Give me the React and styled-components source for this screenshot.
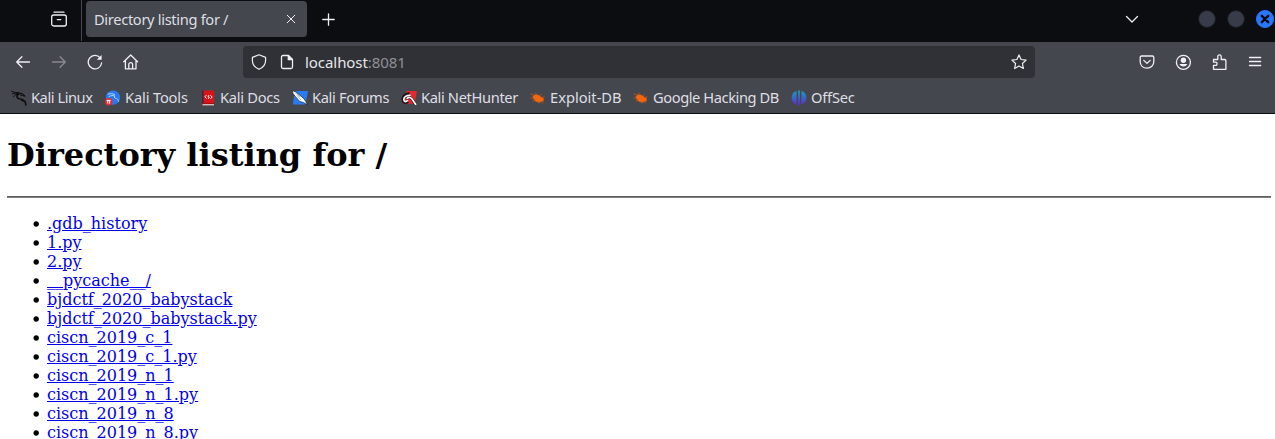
import React from "react";
import styled, { createGlobalStyle } from "styled-components";

const Global = createGlobalStyle`
  * { box-sizing: border-box; }
  html, body { margin: 0; height: 439px; overflow: hidden; background: #fff; }
`;

const Browser = styled.div`
  width: 1275px;
  height: 439px;
  overflow: hidden;
  display: flex;
  flex-direction: column;
  font-family: "Noto Sans", sans-serif;
  font-size: 14.67px;
  color: #f0f0f4;
`;

const TabStrip = styled.div`
  height: 42px;
  flex: none;
  display: flex;
  align-items: flex-start;
  background: #0c0d11;
`;

const FirefoxView = styled.div`
  width: 82px;
  height: 41px;
  padding: 11px 0 0 51px;
  border-right: 1px solid #46484f;
`;

const Tab = styled.div`
  width: 221px;
  height: 36px;
  margin: 1px 0 0 4px;
  padding: 0 8px;
  border-radius: 4px;
  background: #45474f;
  display: flex;
  align-items: center;
  justify-content: space-between;
`;

const Label = styled.span`
  white-space: nowrap;
  line-height: 20px;
  color: #dfdfe3;
  letter-spacing: ${(p) => p.$spacing || 0}px;
`;

const NewTab = styled.div`
  padding: 11px 0 0 13px;
`;

const WindowControls = styled.div`
  margin-left: auto;
  height: 38px;
  display: flex;
  align-items: center;
`;

const TabMenu = styled.div`
  display: flex;
  margin-right: 47px;
`;

const WindowButton = styled.div`
  width: 18px;
  height: 18px;
  margin-left: 11px;
  margin-right: ${(p) => (p.$close ? 1 : 0)}px;
  border-radius: 50%;
  border: 1px solid ${(p) => (p.$close ? "#2777ff" : "#17191f")};
  background: ${(p) => (p.$close ? "#2777ff" : "#383c4a")};
  color: #08090d;
  display: flex;
  align-items: center;
  justify-content: center;
`;

const Toolbar = styled.div`
  height: 40px;
  flex: none;
  display: flex;
  align-items: center;
  padding: 0 12px 0 15px;
  background: #45474f;
`;

const NavButtons = styled.div`
  display: flex;
  gap: 20px;
  width: 228px;
`;

const AddressBar = styled.div`
  width: 792px;
  height: 32px;
  border-radius: 4px;
  background: #303136;
  display: flex;
  align-items: center;
  padding: 0 8px;
  gap: 12px;
`;

const Url = styled.span`
  flex: 1;
  margin-left: -2px;
  padding-bottom: 1px;
  font-size: 15px;
  line-height: 20px;
  letter-spacing: -0.06px;
  color: #e6e6ea;
`;

const Port = styled.span`
  color: #8f8f95;
`;

const Actions = styled.div`
  margin-left: auto;
  display: flex;
  gap: 20px;
`;

const Bookmarks = styled.div`
  height: 32px;
  flex: none;
  display: flex;
  align-items: center;
  padding-left: 11px;
  background: #45474f;
  border-bottom: 1px solid #0c0d11;
`;

const Bookmark = styled.div`
  width: ${(p) => p.$width}px;
  flex: none;
  display: flex;
  align-items: center;
  gap: 4px;

  ${Label} {
    padding-bottom: 2px;
  }
`;

const Icon = styled.svg`
  width: 16px;
  height: 16px;
  flex: none;
  display: block;
  fill: none;
  stroke: currentColor;
  stroke-width: ${(p) => p.$weight || 1.3}px;
  stroke-linecap: round;
  stroke-linejoin: round;
  opacity: ${(p) => (p.$dim ? 0.4 : 1)};
`;

const Favicon = styled.svg`
  width: 16px;
  height: 16px;
  flex: none;
  display: block;
`;

const Page = styled.main`
  flex: 1;
  min-height: 0;
  overflow: hidden;
  padding: 0 4px 0 7px;
  background: #fff;
  color: #000;
  font-family: "DejaVu Serif", serif;
  font-size: 16px;
`;

const Title = styled.h1`
  margin: 22px 0 21px;
  font-size: 32px;
  line-height: 39px;
  font-weight: bold;
`;

const Rule = styled.hr`
  margin: 0;
  height: 2px;
  border: 0;
  border-top: 1px solid #5c5c5c;
  background: #808080;
`;

const Files = styled.ul`
  margin: 16px 0 0;
  padding-left: 26px;
  list-style: none;
`;

const File = styled.li`
  display: flex;
  align-items: flex-start;
  line-height: 19px;
  height: 19px;

  &::before {
    content: "";
    width: 8px;
    height: 8px;
    margin: 6px 7px 0 -1px;
    background: radial-gradient(circle at 4.2px 4px, #000 2.2px, transparent 3.2px);
  }
`;

const Link = styled.a`
  color: #0000ee;
  text-decoration: underline;
`;

const DragonIcon = () => (
  <Favicon viewBox="0 0 16 16" fill="none" stroke="#08080a" strokeLinecap="round">
    <path d="M.6 1.200 3.600 2.400l3.600.2 3 .8M1.400 3.800l3-.6 3.200.2M2.400 6.600l2.400-2 3-.7" strokeWidth=".9" />
    <path d="M7.800 4C5.200 5.200 5.300 8 8 8.700c2.800.6 4.800.8 6 2.800.6 1.200.6 2.400.8 3.600" strokeWidth="1.500" />
    <path d="m10 3.400 2.200.8 1.900 2-2.300-.6-2.400-.7M11 9.200l-.4 1.400 1.600.7" strokeWidth="1" />
  </Favicon>
);

const ToolsIcon = () => (
  <Favicon viewBox="0 0 16 16">
    <circle cx="8" cy="7.600" r="7.200" fill="#2878ef" />
    <path d="M2.600 4.200c3-.9 5.600-.6 7.400.6M3.600 6.800c2-1.300 4-1.500 6-.9-1.200 1.800.5 2.300 2 2.700 1.300.4 1.800 1.500 2 3.100" fill="none" stroke="#bcd6ff" strokeWidth="1" />
    <circle cx="3.700" cy="11.800" r="3.700" fill="#e92b32" />
    <path d="M1.700 10.400h4M2.800 10.400v3.200M4.600 10.400v3.200" stroke="#fff" strokeWidth="1" />
  </Favicon>
);

const DocsIcon = () => (
  <Favicon viewBox="0 0 16 16">
    <path d="M2 .5h12v14H2z" fill="#d91418" />
    <path d="M2 .5h1.500v14H2z" fill="#3b2547" />
    <path d="M2 13h12v1H2z" fill="#a20c10" />
    <path d="M2.500 14H14v1.400H2.500z" fill="#d8b9bb" />
    <path d="M6.400 5.200 4.900 6.800l1.700 1.700M10.500 5.300l1.700 1.700-1.500 1.700M8.900 5.200 8 6.600l1.300.7-.9 1.500" fill="none" stroke="#fff" strokeWidth="1" />
  </Favicon>
);

const ForumsIcon = () => (
  <Favicon viewBox="0 0 16 16">
    <path d="M2.500 1H16l-2.600 13.500H1z" fill="#287cf2" />
    <path d="M.4.6 4 2l7.600 6.400 2 2.800 2 3.900-4.100-2.600-3.900-1.100-4.300-5L1 3.600z" fill="#fff" stroke="#16202f" strokeWidth=".7" />
    <path d="m5 5.400 4 4.700M3.400 3 8 6.700" stroke="#6d7c91" strokeWidth=".6" />
  </Favicon>
);

const NetHunterIcon = () => (
  <Favicon viewBox="0 0 16 16">
    <path d="M5.500 1h10.300l-1.900 12.500L2.500 14z" fill="#e7282d" />
    <path d="M8.500 3.500C4.800 4 1.800 6.300 1.700 9.100c0 3.200 3 4.600 5.200 2.300M5.200 8.600c2.500-2.100 5-.9 6.600 1.600l2.700 3.900" fill="none" stroke="#201719" strokeWidth="3" />
    <path d="M9 5.300C5.500 5.200 2.900 6.900 2.800 9.400c-.1 2.200 1.800 2.900 3.600 1.300M6.200 8.200c2.400-1.600 4.300-.3 5.700 2l2.700 4" fill="none" stroke="#fff" strokeWidth="1.700" strokeLinecap="round" />
  </Favicon>
);

const BugIcon = () => (
  <Favicon viewBox="0 0 16 16">
    <path d="m2.600 6.200 2.300-1.700 3.100.2 3.100 2.100 2.900 2-.7 1.500.9 1.100-2-.1-2.600 1.500-4-1.300-2.200-2.400z" fill="#f5670c" />
    <path d="M.5 3.800 4.500 5.200M.5 8l3.500.3M2.800 11.400l2.800-1.800M5.400 2.600l1.400 2.200M11.500 4.100l-2 2M14.500 6.700l-3 1M8.500 13.300l-.4-2.300M12.600 13.400l-2-2.200" stroke="#b9561b" strokeWidth=".9" fill="none" />
  </Favicon>
);

const OffSecIcon = () => (
  <Favicon viewBox="0 0 16 16">
    <defs>
      <linearGradient id="offsec" gradientUnits="userSpaceOnUse" x1="0" y1="0" x2="0" y2="16">
        <stop offset="0" stopColor="#16a5bb" />
        <stop offset="1" stopColor="#6122d5" />
      </linearGradient>
    </defs>
    <path d="M5.600 1.100v13.400C2.200 13.400.6 10.900.6 7.800S2.200 2.200 5.600 1.100zM10.400 1.100v13.400c3.400-1.100 5-3.600 5-6.700s-1.600-5.600-5-6.700zM7.100.6h1.800v15H7.100z" fill="url(#offsec)" />
  </Favicon>
);

const bookmarks = [
  { name: "Kali Linux", Glyph: DragonIcon, width: 94, spacing: -0.45 },
  { name: "Kali Tools", Glyph: ToolsIcon, width: 95, spacing: -0.15 },
  { name: "Kali Docs", Glyph: DocsIcon, width: 92, spacing: -0.27 },
  { name: "Kali Forums", Glyph: ForumsIcon, width: 109, spacing: -0.35 },
  { name: "Kali NetHunter", Glyph: NetHunterIcon, width: 129, spacing: -0.36 },
  { name: "Exploit-DB", Glyph: BugIcon, width: 103, spacing: 0 },
  { name: "Google Hacking DB", Glyph: BugIcon, width: 158, spacing: -0.42 },
  { name: "OffSec", Glyph: OffSecIcon, width: 80, spacing: -0.2 },
];

const files = [
  ".gdb_history",
  "1.py",
  "2.py",
  "__pycache__/",
  "bjdctf_2020_babystack",
  "bjdctf_2020_babystack.py",
  "ciscn_2019_c_1",
  "ciscn_2019_c_1.py",
  "ciscn_2019_n_1",
  "ciscn_2019_n_1.py",
  "ciscn_2019_n_8",
  "ciscn_2019_n_8.py",
];

export default function App() {
  return (
    <Browser>
      <Global />
      <TabStrip>
        <FirefoxView>
          <Icon viewBox="0 0 16 16">
            <path d="M3 1.200h10M6.300 8.600h3.400" />
            <rect x=".7" y="4" width="14.600" height="11" rx="2" />
          </Icon>
        </FirefoxView>
        <Tab>
          <Label $spacing={-0.33}>Directory listing for /</Label>
          <Icon viewBox="0 0 16 16" $weight={1}>
            <path d="m4.200 4.200 7.600 7.600M11.800 4.200l-7.600 7.600" />
          </Icon>
        </Tab>
        <NewTab>
          <Icon viewBox="0 0 16 16">
            <path d="M8.500 2.800v11.400M2.800 8.500h11.400" />
          </Icon>
        </NewTab>
        <WindowControls>
          <TabMenu>
            <Icon viewBox="0 0 16 16">
              <path d="M2.500 5.500 8 11l5.500-5.500" />
            </Icon>
          </TabMenu>
          <WindowButton />
          <WindowButton />
          <WindowButton $close>
            <Icon viewBox="0 0 16 16" $weight={2.4}>
              <path d="m4.800 4.800 6.400 6.400M11.200 4.800l-6.400 6.400" />
            </Icon>
          </WindowButton>
        </WindowControls>
      </TabStrip>
      <Toolbar>
        <NavButtons>
          <Icon viewBox="0 0 16 16">
            <path d="M14.500 8H1.700M6.900 2.800 1.700 8l5.200 5.200" />
          </Icon>
          <Icon viewBox="0 0 16 16" $dim>
            <path d="M1.500 8h12.800M9.100 2.800 14.300 8l-5.200 5.200" />
          </Icon>
          <Icon viewBox="0 0 16 16">
            <path d="M13.200 4A6.700 6.700 0 1 0 14.600 9" />
            <path d="M14.600 1v4.800H9.800z" fill="currentColor" stroke="none" />
          </Icon>
          <Icon viewBox="0 0 16 16">
            <path d="M.8 7.800 7.700 1l6.900 6.800M2.400 6.800v8H13v-8M5.800 14.500v-4a1.900 1.900 0 0 1 3.800 0v4" />
          </Icon>
        </NavButtons>
        <AddressBar>
          <Icon viewBox="0 0 16 16" $weight={1.2}>
            <path d="M8 .8 14.600 3.400v2.800c0 4-2.300 7.300-6.600 9.100-4.300-1.800-6.600-5.100-6.600-9.100V3.400z" />
          </Icon>
          <Icon viewBox="0 0 16 16">
            <path d="M9.500 1.500H4a1.500 1.500 0 0 0-1.500 1.500v10A1.500 1.500 0 0 0 4 14.500h8a1.500 1.500 0 0 0 1.500-1.500V5.500z" />
            <path d="M9.300 1.700v4h4z" fill="currentColor" />
          </Icon>
          <Url>
            localhost<Port>:8081</Port>
          </Url>
          <Icon viewBox="0 0 16 16" $weight={1.2}>
            <path d="m8 .9 2.100 4.600 5 .6-3.700 3.400 1 5L8 12l-4.400 2.500 1-5L.9 6.100l5-.6z" />
          </Icon>
        </AddressBar>
        <Actions>
          <Icon viewBox="0 0 16 16">
            <path d="M2.600 2h10.800c.9 0 1.400.6 1.400 1.400v4C14.800 11.400 12 14.200 8 14.200S1.200 11.400 1.200 7.400v-4C1.200 2.600 1.700 2 2.600 2z" />
            <path d="m4.800 6.400 3.200 3 3.200-3" />
          </Icon>
          <Icon viewBox="0 0 16 16">
            <circle cx="8.400" cy="8.300" r="7" />
            <path d="M4.600 10h7.600v.6a4.400 4.400 0 0 1-3.800 2 4.400 4.400 0 0 1-3.800-2z" fill="currentColor" stroke="none" />
            <circle cx="8.400" cy="6.300" r="2.700" fill="currentColor" stroke="none" />
          </Icon>
          <Icon viewBox="0 0 16 16">
            <path d="M2.500 5.500h4.300V2.500a1.700 1.700 0 0 1 3.400 0v3h3.500c.8 0 1.200.4 1.200 1.200v8.600H2.500v-3.900h2a1.600 1.600 0 0 0 0-3.200h-2z" />
          </Icon>
          <Icon viewBox="0 0 16 16">
            <path d="M2.500 3.500h11.200M2.500 7.500h11.200M2.500 11.500h11.200" />
          </Icon>
        </Actions>
      </Toolbar>
      <Bookmarks>
        {bookmarks.map(({ name, Glyph, width, spacing }) => (
          <Bookmark key={name} $width={width}>
            <Glyph />
            <Label $spacing={spacing}>{name}</Label>
          </Bookmark>
        ))}
      </Bookmarks>
      <Page>
        <Title>Directory listing for /</Title>
        <Rule />
        <Files>
          {files.map((name) => (
            <File key={name}>
              <Link>{name}</Link>
            </File>
          ))}
        </Files>
      </Page>
    </Browser>
  );
}
